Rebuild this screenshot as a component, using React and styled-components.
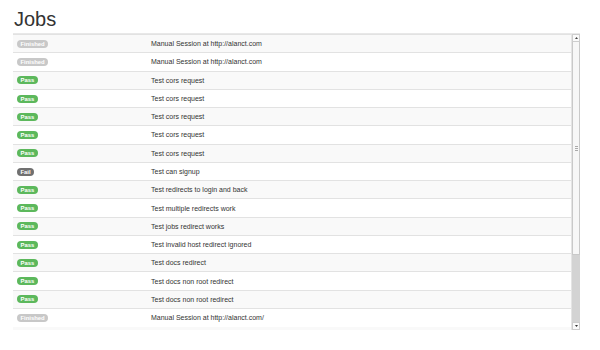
import React from "react";
import styled, { createGlobalStyle } from "styled-components";

const Global = createGlobalStyle`
  html, body { margin: 0; padding: 0; background: #fff; }
  body { font-family: "Liberation Sans", Arial, sans-serif; color: #333; }
`;

const Page = styled.div`
  padding: 8px 20px 0 13px;
`;

const Title = styled.h1`
  margin: 0 0 3px 1px;
  font-size: 20px;
  line-height: 22px;
  font-weight: 400;
  color: #333;
`;

const Frame = styled.div`
  display: flex;
  height: 297px;
  border-top: 1px solid #e8e8e8;
  box-sizing: border-box;
`;

const Viewport = styled.div`
  flex: 1;
  overflow: hidden;
  background: #f9f9f9;
`;

const ScrollBar = styled.div`
  width: 9px;
  display: flex;
  flex-direction: column;
  background: #d3d3d3;
  border-left: 1px solid #e4e4e4;
  box-sizing: border-box;
`;

const Arrow = styled.div`
  height: 6px;
  flex: none;
  background: #fafafa;
  border: 1px solid #cdcdcd;
  display: flex;
  align-items: center;
  justify-content: center;
  svg { display: block; }
`;

const Thumb = styled.div`
  height: 213px;
  flex: none;
  background: #f7f7f7;
  border: 1px solid #c9c9c9;
  border-top: none;
  box-sizing: border-box;
  display: flex;
  align-items: center;
  justify-content: center;
`;

const Grip = styled.div`
  width: 3px;
  height: 5px;
  background: repeating-linear-gradient(#aaa 0 1px, transparent 1px 2px);
`;

const Track = styled.div`
  flex: 1;
`;

const Table = styled.table`
  width: 100%;
  border-collapse: collapse;
  font-size: 7px;
  color: #333;
`;

const Row = styled.tr`
  height: 18.27px;
  background: ${(p) => (p.$odd ? "#f9f9f9" : "#fff")};
`;

const Cell = styled.td`
  padding: 0 4px;
  border-top: 1px solid #e2e2e2;
  vertical-align: middle;
  white-space: nowrap;
  width: ${(p) => p.$w || "auto"};
`;

const colors = {
  Finished: "#c8c8c8",
  Pass: "#5cb85c",
  Fail: "#707070",
};

const Badge = styled.span`
  display: inline-block;
  font-size: 5.9px;
  font-weight: 700;
  line-height: 8px;
  height: 8px;
  padding: 0 3.5px;
  border-radius: 4px;
  color: #fff;
  background: ${(p) => colors[p.$status]};
  vertical-align: middle;
`;

const jobs = [
  ["Finished", "Manual Session at http://alanct.com"],
  ["Finished", "Manual Session at http://alanct.com"],
  ["Pass", "Test cors request"],
  ["Pass", "Test cors request"],
  ["Pass", "Test cors request"],
  ["Pass", "Test cors request"],
  ["Pass", "Test cors request"],
  ["Fail", "Test can signup"],
  ["Pass", "Test redirects to login and back"],
  ["Pass", "Test multiple redirects work"],
  ["Pass", "Test jobs redirect works"],
  ["Pass", "Test invalid host redirect ignored"],
  ["Pass", "Test docs redirect"],
  ["Pass", "Test docs non root redirect"],
  ["Pass", "Test docs non root redirect"],
  ["Finished", "Manual Session at http://alanct.com/"],
];

export default function App() {
  return (
    <Page>
      <Global />
      <Title>Jobs</Title>
      <Frame>
        <Viewport>
          <Table>
            <tbody>
              {jobs.map(([status, name], i) => (
                <Row key={i} $odd={i % 2 === 0}>
                  <Cell $w="126px">
                    <Badge $status={status}>{status}</Badge>
                  </Cell>
                  <Cell>{name}</Cell>
                </Row>
              ))}
            </tbody>
          </Table>
        </Viewport>
        <ScrollBar>
          <Arrow>
            <svg width="3" height="2" viewBox="0 0 3 2"><path d="M1.5 0 L3 2 L0 2 Z" fill="#444" /></svg>
          </Arrow>
          <Thumb>
            <Grip />
          </Thumb>
          <Track />
          <Arrow>
            <svg width="3" height="2" viewBox="0 0 3 2"><path d="M0 0 L3 0 L1.5 2 Z" fill="#333" /></svg>
          </Arrow>
        </ScrollBar>
      </Frame>
    </Page>
  );
}
